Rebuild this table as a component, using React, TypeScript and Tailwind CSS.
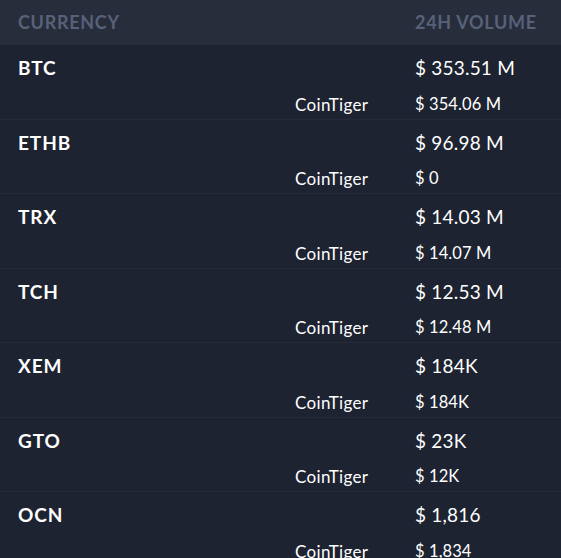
import React from "react";

const data: [string, string, string][] = [
  ["BTC", "$ 353.51 M", "$ 354.06 M"],
  ["ETHB", "$ 96.98 M", "$ 0"],
  ["TRX", "$ 14.03 M", "$ 14.07 M"],
  ["TCH", "$ 12.53 M", "$ 12.48 M"],
  ["XEM", "$ 184K", "$ 184K"],
  ["GTO", "$ 23K", "$ 12K"],
  ["OCN", "$ 1,816", "$ 1,834"],
];

export default function App() {
  return (
    <div
      className="w-[561px] h-[558px] overflow-hidden bg-[#1e2331] text-white"
      style={{ fontFamily: "Lato, 'Liberation Sans', sans-serif" }}
    >
      <div className="flex h-[45px] items-center bg-[#282d3b] text-[18px] font-bold uppercase tracking-[0.7px] text-[#576179]">
        <div className="pl-[18px] flex-1">Currency</div>
        <div className="w-[146px]">24h Volume</div>
      </div>
      {data.map(([sym, vol, sub]) => (
        <div key={sym} className="border-b border-[#262b39]">
          <div className="flex h-[45.5px] items-center pt-[1px]">
            <div className="pl-[18px] flex-1 text-[19px] font-bold tracking-[0.9px]">{sym}</div>
            <div className="w-[146px] text-[19px] tracking-[0.2px]">{vol}</div>
          </div>
          <div className="flex h-[28px] items-start pt-[1px] text-[16px]">
            <div className="flex-1" />
            <div className="w-[120px] text-[17px] tracking-[0.35px]">CoinTiger</div>
            <div className="w-[146px] text-[16.5px] tracking-[0.1px]">{sub}</div>
          </div>
        </div>
      ))}
    </div>
  );
}
